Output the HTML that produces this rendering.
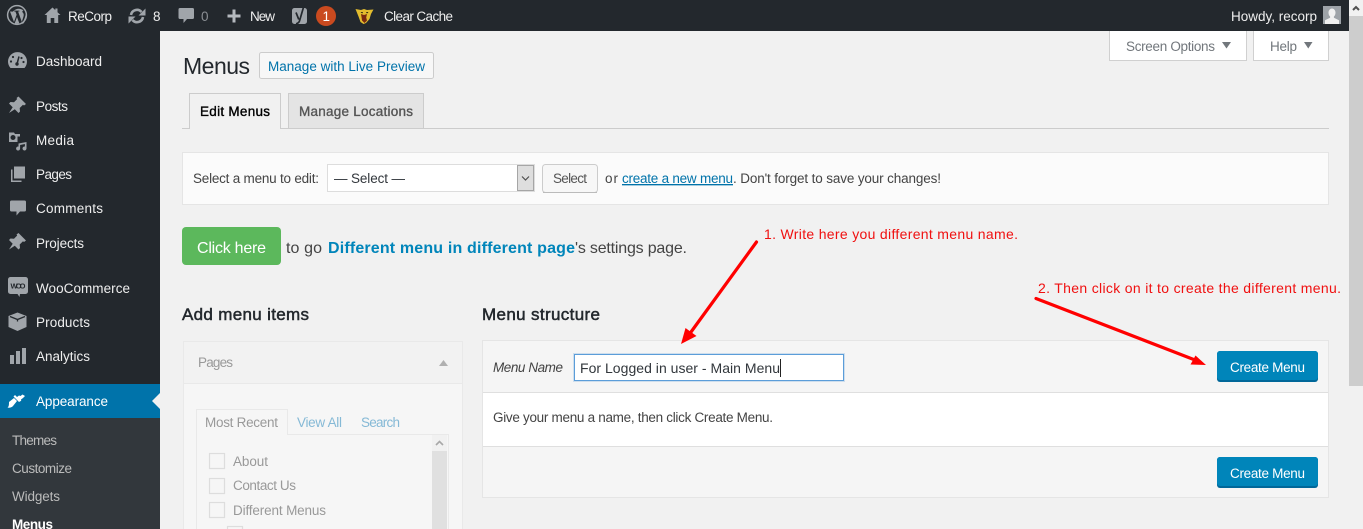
<!DOCTYPE html>
<html lang="en"><head><meta charset="utf-8"><title>Menus</title>
<style>
html,body{margin:0;padding:0;width:1363px;height:529px;overflow:hidden;background:#f1f1f1}
svg{display:block}
text{font-family:"Liberation Sans",sans-serif;font-size:13.5px;fill:#444;white-space:pre}
.a text{fill:#eee}
.s text{fill:#bbb}
.i{fill:#a0a5aa}
.f text{fill:#999}
</style></head><body>
<svg xmlns="http://www.w3.org/2000/svg" width="1363" height="529" viewBox="0 0 1363 529">
<rect width="1363" height="529" fill="#f1f1f1"/>
<!-- sidebar -->
<rect x="0" y="31" width="160" height="498" fill="#23282d"/>
<rect x="0" y="384" width="160" height="34" fill="#0073aa"/>
<rect x="0" y="418" width="160" height="111" fill="#32373c"/>
<path d="M160 393l-8 8 8 8z" fill="#f1f1f1"/>
<!-- admin bar -->
<rect x="0" y="0" width="1349" height="31" fill="#23282d"/>
<!-- scrollbar -->
<rect x="1349" y="0" width="14" height="529" fill="#f1f1f1"/>
<rect x="1349" y="16" width="14" height="370" fill="#cdcdcd"/>
<path d="M1353 10l3-3 3 3" fill="none" stroke="#505050" stroke-width="2"/>

<!-- admin bar icons -->
<g class="i">
<circle cx="17" cy="15" r="9.400" fill="none" stroke="#a0a5aa" stroke-width="1.500"/>
<path d="M10 11.500l4 10.500 2.600-7.200-1.200-3.300h-1.200v-.9h5.200v.9h-1.300l3.700 10.400 1.700-5.400c.7-2.300-.2-3.300-.9-4.100-.6-.8 0-1.900 1-1.900-3.300-2.800-8-2.200-10.700 1.100z"/>
<path d="M17 17l-2.300 6.400c1.500.4 3.100.4 4.600-.1z"/>
<path d="M25.400 12.500c.5 2-.1 4-1 6.300l-2.100 5.500c3-1.800 4.600-6.700 3.100-11.800z"/>
<path d="M52.500 7.500l-8 7.500h2.300v8h3.900v-5h3.600v5h3.900v-8h2.300l-3-2.800V8.500h-2.200v1.600z"/>
<path d="M131 15A6 6 0 0 1 141.500 12M143 17A6 6 0 0 1 132.500 20" fill="none" stroke="#a0a5aa" stroke-width="2.600"/>
<path d="M145.500 8.500v7h-7zM128.500 23.500v-7h7z"/>
<path d="M180 8h12.500a1.500 1.500 0 0 1 1.500 1.500v8a1.500 1.500 0 0 1-1.500 1.500H187l-3.500 4v-4H180a1.500 1.500 0 0 1-1.500-1.500v-8A1.500 1.500 0 0 1 180 8z"/>
<path d="M232.500 9.500h3v5h5v3h-5v5h-3v-5h-5v-3h5z" fill="#b4b9be"/>
<rect x="292" y="8" width="15" height="16" rx="2.500"/>
<path d="M296 12.500l2.800 7M304 5.500l-4.500 15.500c-.5 1.500-1.500 2.300-3.500 2.800" fill="none" stroke="#23282d" stroke-width="1.700"/>
</g>
<circle cx="326" cy="16" r="10" fill="#ca4a1f"/>
<text x="322.500" y="21" style="fill:#fff">1</text>
<!-- tiger icon -->
<path d="M355.500 9l5.500 1 3-1 3 1 6.500-.5-2.500 4.500-1.500 5-3.500 4-2.500 1-3-2-2-5.500z" fill="#e3bd2e"/>
<path d="M361 14l3 1 3-1-.8 3.500.8 3-2.500 2.500-2.500-2.500-.4-3z" fill="#7a2a10"/>
<path d="M360.500 12h2.500l-.8 1.500zM366 12h2.500l-1.500 1.500z" fill="#1d1d10"/>
<rect x="1323" y="6" width="18" height="18" fill="#9ea3a8"/>
<path d="M1332 8.500c2 0 3.500 1.800 3.500 4.200 0 1.600-.7 3-1.600 3.800v1.200l5.100 2.500V24h-14v-3.800l5.100-2.500v-1.200c-.9-.8-1.600-2.200-1.600-3.800 0-2.400 1.500-4.200 3.500-4.200z" fill="#f0f0f0"/>

<g class="a">
<text x="68" y="21" textLength="44">ReCorp</text>
<text x="153" y="21" textLength="7">8</text>
<text x="201" y="21" textLength="7" style="fill:#8b8f94">0</text>
<text x="250" y="21" textLength="25">New</text>
<text x="384" y="21" textLength="69">Clear Cache</text>
<text x="1231" y="21" textLength="86">Howdy, recorp</text>
<text x="36" y="66" textLength="66">Dashboard</text>
<text x="36" y="111" textLength="32">Posts</text>
<text x="36" y="145" textLength="38">Media</text>
<text x="36" y="179" textLength="36">Pages</text>
<text x="36" y="213" textLength="67">Comments</text>
<text x="36" y="248" textLength="48">Projects</text>
<text x="36" y="293" textLength="94">WooCommerce</text>
<text x="36" y="327" textLength="54">Products</text>
<text x="36" y="361" textLength="54">Analytics</text>
<text x="36" y="406" textLength="72" style="fill:#fff">Appearance</text>
</g>
<g class="s">
<text x="12" y="445" textLength="45">Themes</text>
<text x="12" y="473" textLength="60">Customize</text>
<text x="12" y="501" textLength="48">Widgets</text>
<text x="12" y="529" textLength="41" style="fill:#fff;font-weight:bold">Menus</text>
</g>

<!-- sidebar icons -->
<g class="i">
<path d="M10.500 68a9.500 9.500 0 1 1 14 0z"/>
<path d="M17 64l2-7.500" stroke="#23282d" stroke-width="1.500" fill="none"/>
<circle cx="17" cy="64" r="1.700" fill="#23282d"/>
<circle cx="13" cy="57" r="1.100" fill="#23282d"/><circle cx="21.500" cy="58" r="1.100" fill="#23282d"/><circle cx="11" cy="61.500" r="1.100" fill="#23282d"/><circle cx="23.500" cy="62" r="1.100" fill="#23282d"/>
<path id="pin" d="M18.500 96.500l7.500 7.500-2 1.500-1-.7-3.300 3.200.3 3.500-1.500 1.500-3.700-3.700-5.800 3.700 3.700-5.800-3.700-3.700 1.500-1.500 3.500.3 3.200-3.300-.7-1z"/>
<path d="M18.500 233l7.500 7.500-2 1.500-1-.7-3.300 3.200.3 3.500-1.500 1.500-3.700-3.700-5.800 3.700 3.700-5.800-3.700-3.700 1.500-1.500 3.500.3 3.200-3.300-.7-1z"/>
<path fill-rule="evenodd" d="M9 132.500h5l1 1.500h5v2.500h-2.500V142H9zM13 135a2.500 2.500 0 1 0 .01 0z"/>
<path d="M18.500 143.500l8-1.500v6.500a2 2 0 1 1-1.600-2v-2.500l-4.800 1v3.500a2 2 0 1 1-1.600-1.900z"/>
<path d="M14 166.500h11v12H14zM11 169.500h1.500v11h9v1.500H11z"/>
<path d="M11.500 200.500h13a1.500 1.500 0 0 1 1.500 1.500v8a1.500 1.500 0 0 1-1.500 1.500H20l-3.500 4v-4h-5a1.500 1.500 0 0 1-1.500-1.500v-8a1.500 1.500 0 0 1 1.500-1.500z"/>
<rect x="8" y="277" width="20" height="17" rx="2.500"/>
<path d="M17.500 294l2 3 .5-3z"/>
<path d="M17.500 312.500l9 3.500v11l-9 4-9-4v-11z"/>
<path d="M10 316.500l7.500 3 7.500-3M17.500 319.500v2" fill="none" stroke="#23282d" stroke-width="1.300"/>
<path d="M10 355h4v9h-4zM16 351h4v13h-4zM22 348h4v16h-4z"/>
</g>
<text x="10.500" y="288.500" textLength="15" style="font-size:7.500px;font-weight:bold;fill:#23282d">WOO</text>
<path d="M9 402l5-4 3 3-4 5c-1 1.500-4 2-5.500 1.500 1.500-1 1.500-3 1.500-5.500zM13.500 396.500l1.500-1.500 2 2 2-1.500 1.500.5 2-1.500 2.500 1.500-2 2-2 1.500.2 1.200-2.200 1.300z" fill="#fff"/>

<!-- screen meta -->
<path d="M1109.500 31v29.500h137V31M1253.500 31v29.500h75V31" fill="#fff" stroke="#d0d0d0"/>
<text x="1126" y="51" textLength="89" style="fill:#72777c">Screen Options</text>
<text x="1270" y="51" textLength="27" style="fill:#72777c">Help</text>
<path d="M1222 42h9l-4.500 6.500zM1304 42h8.500l-4.250 6.500z" fill="#72777c"/>

<!-- heading -->
<text x="183" y="74" textLength="67" style="font-size:23px;fill:#23282d">Menus</text>
<rect x="259.500" y="52.500" width="174" height="26" rx="2" fill="#f7f7f7" stroke="#ccc"/>
<text x="268" y="71" textLength="157" style="fill:#0073aa">Manage with Live Preview</text>

<!-- tabs -->
<path d="M182 128.500h1147" stroke="#ccc" fill="none"/>
<rect x="288.500" y="93.500" width="135" height="35" fill="#e4e4e4" stroke="#ccc"/>
<path d="M189.500 129V93.500h91V129" fill="#f1f1f1" stroke="#ccc"/>
<rect x="190" y="127" width="90" height="3" fill="#f1f1f1"/>
<text x="200" y="116" textLength="70" style="fill:#000;stroke:#000;stroke-width:.35">Edit Menus</text>
<text x="299" y="116" textLength="114" style="fill:#555;stroke:#555;stroke-width:.35">Manage Locations</text>

<!-- select box -->
<rect x="182.500" y="152.500" width="1146" height="52" fill="#fbfbfb" stroke="#e5e5e5"/>
<text x="193" y="183" textLength="126">Select a menu to edit:</text>
<rect x="327.500" y="164.500" width="207" height="27" fill="#fff" stroke="#ddd"/>
<rect x="517.500" y="165.500" width="16" height="25" fill="#dedede" stroke="#a6a6a6"/>
<path d="M522 176.500l3.500 3.500 3.500-3.500" fill="none" stroke="#505050" stroke-width="1.200"/>
<text x="334" y="183" textLength="71" style="fill:#32373c">— Select —</text>
<rect x="542.500" y="164.500" width="55" height="28" rx="3" fill="#f7f7f7" stroke="#ccc"/>
<path d="M543 192.500h54" stroke="#bbb"/>
<text x="553" y="183" textLength="34" style="fill:#555">Select</text>
<text x="605" y="183" textLength="13">or</text>
<text x="622" y="183" textLength="111" style="fill:#0073aa;text-decoration:underline">create a new menu</text>
<text x="733" y="183" textLength="208">. Don't forget to save your changes!</text>

<!-- click here -->
<rect x="182" y="227" width="99" height="38" rx="4" fill="#5cb85c"/>
<text x="197" y="253" textLength="69" style="font-size:16px;fill:#fff">Click here</text>
<text x="286" y="253" textLength="36" style="font-size:16px">to go</text>
<text x="328" y="253" textLength="247" style="font-size:16px;font-weight:bold;fill:#0085ba">Different menu in different page</text>
<text x="575" y="253" textLength="112" style="font-size:16px">'s settings page.</text>

<!-- headings -->
<text x="182" y="320" textLength="127" style="font-size:17px;fill:#23282d;stroke:#23282d;stroke-width:.5">Add menu items</text>
<text x="482" y="320" textLength="118" style="font-size:17px;fill:#23282d;stroke:#23282d;stroke-width:.5">Menu structure</text>

<!-- left pages box -->
<rect x="183.500" y="341.500" width="279" height="200" fill="#f6f6f6" stroke="#e9e9e9"/>
<rect x="184" y="342" width="278" height="41" fill="#f2f2f2"/>
<path d="M184 383.500h278" stroke="#e9e9e9"/>
<path d="M439 366l4.500-6 4.500 6z" fill="#b0b0b0"/>
<path d="M196.500 529V434.500h252V529" fill="#f6f6f6" stroke="#e9e9e9"/>
<path d="M196.500 435V409.500h91V435" fill="#f6f6f6" stroke="#e9e9e9"/>
<rect x="197" y="433" width="90" height="3" fill="#f6f6f6"/>
<g fill="none" stroke="#ddd" stroke-width="1.200">
<rect x="209.500" y="453.500" width="15" height="15"/>
<rect x="209.500" y="478.500" width="15" height="15"/>
<rect x="209.500" y="502.500" width="15" height="15"/>
<rect x="227.500" y="526.500" width="15" height="15"/>
</g>
<rect x="432" y="435" width="15" height="94" fill="#f1f1f1"/>
<rect x="432" y="451" width="15" height="78" fill="#e0e0e0"/>
<path d="M436 445l3.500-3.500 3.500 3.500" fill="none" stroke="#a8a8a8" stroke-width="1.600"/>
<g class="f">
<text x="198" y="367" textLength="35">Pages</text>
<text x="205" y="427" textLength="73">Most Recent</text>
<text x="297" y="427" textLength="45" style="fill:#85b9d6">View All</text>
<text x="361" y="427" textLength="39" style="fill:#85b9d6">Search</text>
<text x="233" y="466" textLength="35">About</text>
<text x="233" y="490" textLength="63">Contact Us</text>
<text x="233" y="515" textLength="93">Different Menus</text>
</g>

<!-- right menu box -->
<rect x="482.500" y="340.500" width="846" height="157" fill="#f5f5f5" stroke="#e5e5e5"/>
<rect x="483" y="392" width="845" height="54" fill="#fff"/>
<path d="M483 392.500h845M483 446.500h845" stroke="#dfdfdf"/>
<text x="493" y="372" textLength="70" style="font-style:italic">Menu Name</text>
<rect x="574.500" y="354.500" width="269" height="26" fill="#fff" stroke="#5b9dd9"/>
<rect x="573.500" y="353.500" width="271" height="28" fill="none" stroke="#5b9dd9" stroke-opacity=".25"/>
<text x="580" y="373" textLength="200" style="font-size:14px;fill:#32373c">For Logged in user - Main Menu</text>
<path d="M780.500 359v18" stroke="#222"/>
<text x="493" y="422" textLength="280">Give your menu a name, then click Create Menu.</text>
<rect x="1217" y="351" width="101" height="31" rx="3" fill="#006799"/>
<rect x="1217" y="351" width="101" height="29" rx="3" fill="#0085ba"/>
<text x="1230" y="372" textLength="75" style="fill:#fff">Create Menu</text>
<rect x="1217" y="457" width="101" height="31" rx="3" fill="#006799"/>
<rect x="1217" y="457" width="101" height="29" rx="3" fill="#0085ba"/>
<text x="1230" y="478" textLength="75" style="fill:#fff">Create Menu</text>

<!-- annotations -->
<text x="764" y="239" textLength="254" style="font-size:14px;fill:#f01010">1. Write here you different menu name.</text>
<text x="1038" y="293" textLength="303" style="font-size:14px;fill:#f01010">2. Then click on it to create the different menu.</text>
<path d="M756.500 242L691 332" stroke="#f00" stroke-width="3.200" stroke-linecap="round" fill="none"/>
<path d="M681 344l4.500-16 11 8z" fill="#f00"/>
<path d="M1036 298.500L1195 360" stroke="#f00" stroke-width="3.200" stroke-linecap="round" fill="none"/>
<path d="M1206 365l-15.500-.5 5-9z" fill="#f00"/>
</svg>
</body></html>
